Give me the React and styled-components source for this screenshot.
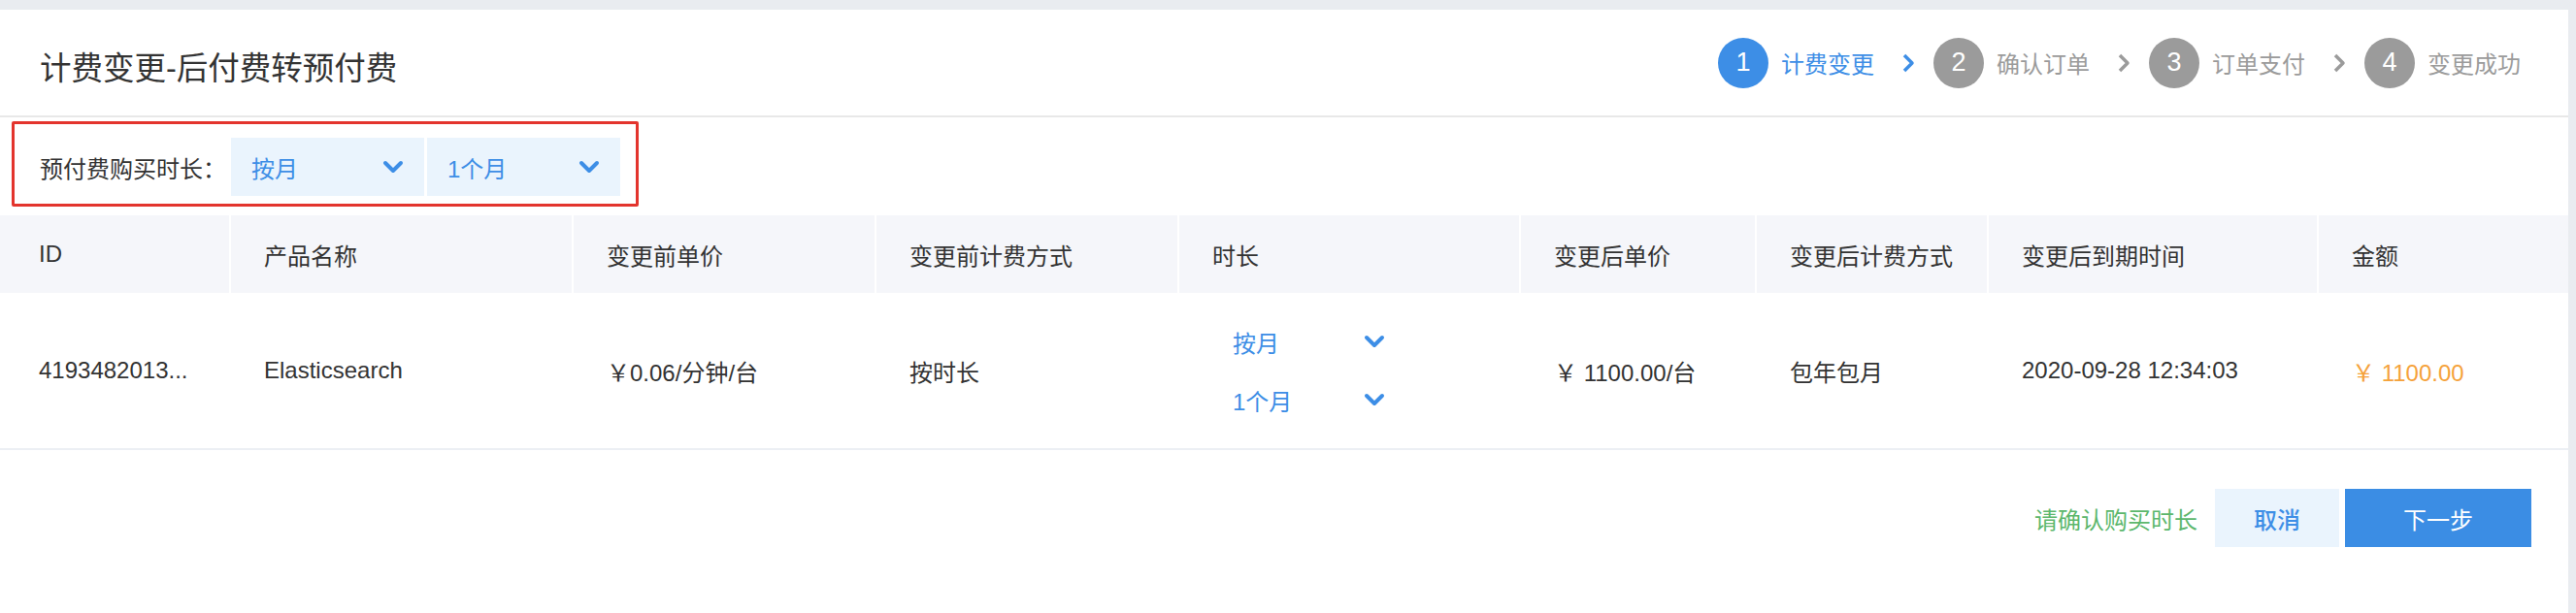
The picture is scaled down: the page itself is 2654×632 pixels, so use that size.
import React from 'react'
import styled, { createGlobalStyle } from 'styled-components'

const BLUE = '#3d8ee6'
const GRAY = '#9b9b9b'

const GlobalStyle = createGlobalStyle`
  html, body {
    margin: 0;
    padding: 0;
    background: #e9ecf0;
  }
  body {
    font-family: "Liberation Sans", "Noto Sans CJK SC", sans-serif;
    color: #333;
  }
`

const Page = styled.div`
  box-sizing: border-box;
  min-height: 632px;
  padding: 10px 8px 0 0;
  display: flex;
  flex-direction: column;
`

const Card = styled.div`
  flex: 1;
  background: #fff;
  display: flex;
  flex-direction: column;
`

const Header = styled.div`
  height: 109px;
  border-bottom: 2px solid #e8e8e8;
  display: flex;
  align-items: center;
  justify-content: space-between;
  padding: 0 49px 0 41px;
`

const Title = styled.div`
  font-size: 32.5px;
  color: #333;
  padding-top: 5px;
`

const Steps = styled.div`
  display: flex;
  align-items: center;
`

const Step = styled.div`
  display: flex;
  align-items: center;
  gap: 13px;
  color: ${props => props.$active ? BLUE : GRAY};
  font-size: 24px;
`

const Circle = styled.div`
  width: 52px;
  height: 52px;
  border-radius: 50%;
  background: ${props => props.$active ? BLUE : GRAY};
  color: #fff;
  font-size: 27px;
  display: flex;
  align-items: center;
  justify-content: center;
`

const StepArrow = styled.svg`
  margin: 0 18px 0 28px;
  color: ${props => props.$active ? BLUE : GRAY};
`

const FilterSection = styled.div`
  padding: 4px 0 9px 12px;
`

const FilterBox = styled.div`
  box-sizing: border-box;
  width: 646px;
  height: 88px;
  border: 3px solid #e3342d;
  border-radius: 2px;
  padding: 11px 0 5px 26px;
  display: flex;
  align-items: center;
`

const Label = styled.span`
  font-size: 24px;
  color: #333;
  margin-right: 5px;
`

const SelectGroup = styled.div`
  display: flex;
  gap: 3px;
`

const SelectBox = styled.div`
  box-sizing: border-box;
  width: 199px;
  height: 60px;
  padding: 0 21px;
  background: ${props => props.$filled ? '#eaf4fd' : 'transparent'};
  color: ${BLUE};
  font-size: 24px;
  display: flex;
  align-items: center;
  justify-content: space-between;
`

const Table = styled.div`
  display: flex;
  flex-direction: column;
`

const Row = styled.div`
  display: grid;
  grid-template-columns: 236px 351px 310px 310px 350px 241px 237px 338px 1fr;
  column-gap: 2px;
  height: ${props => props.$head ? '80px' : '160px'};
  border-bottom: ${props => props.$head ? 'none' : '2px solid #eceff4'};
`

const Cell = styled.div`
  display: flex;
  flex-direction: column;
  justify-content: center;
  padding-left: 34px;
  font-size: 24px;
  background: ${props => props.$head ? '#f5f6fa' : '#fff'};
  color: ${props => props.$color || '#333'};
  white-space: nowrap;
  &:first-child {
    padding-left: 40px;
  }
`

const Footer = styled.div`
  display: flex;
  justify-content: flex-end;
  align-items: center;
  padding: 40px 38px 0 0;
`

const Hint = styled.span`
  color: #5cb76c;
  font-size: 24px;
  margin-right: 18px;
`

const Button = styled.button`
  height: 60px;
  width: ${props => props.$primary ? '192px' : '128px'};
  margin-left: ${props => props.$primary ? '6px' : '0'};
  border: none;
  border-radius: 0;
  background: ${props => props.$primary ? '#3b8de4' : '#eaf4fd'};
  color: ${props => props.$primary ? '#fff' : BLUE};
  font-family: inherit;
  font-size: 24px;
  font-weight: ${props => props.$primary ? 400 : 500};
  cursor: pointer;
`

const ChevronDown = () => (
  <svg width="22" height="14" viewBox="0 0 22 14">
    <polyline points="3,3 11,11 19,3" fill="none" stroke="currentColor" strokeWidth="4" strokeLinecap="round" strokeLinejoin="round" />
  </svg>
)

const Select = ({ value, filled }) => (
  <SelectBox $filled={filled}>
    <span>{value}</span>
    <ChevronDown />
  </SelectBox>
)

const steps = [
  { n: 1, label: '计费变更' },
  { n: 2, label: '确认订单' },
  { n: 3, label: '订单支付' },
  { n: 4, label: '变更成功' },
]

const columns = ['ID', '产品名称', '变更前单价', '变更前计费方式', '时长', '变更后单价', '变更后计费方式', '变更后到期时间', '金额']

export default function App() {
  const current = 1
  return (
    <Page>
      <GlobalStyle />
      <Card>
        <Header>
          <Title>计费变更-后付费转预付费</Title>
          <Steps>
            {steps.map((s, i) => (
              <React.Fragment key={s.n}>
                <Step $active={s.n === current}>
                  <Circle $active={s.n === current}>{s.n}</Circle>
                  {s.label}
                </Step>
                {i < steps.length - 1 && (
                  <StepArrow $active={s.n === current} width="15" height="22" viewBox="0 0 15 22">
                    <polyline points="3,3 11,11 3,19" fill="none" stroke="currentColor" strokeWidth="3.5" strokeLinejoin="round" />
                  </StepArrow>
                )}
              </React.Fragment>
            ))}
          </Steps>
        </Header>

        <FilterSection>
          <FilterBox>
            <Label>预付费购买时长：</Label>
            <SelectGroup>
              <Select value="按月" filled />
              <Select value="1个月" filled />
            </SelectGroup>
          </FilterBox>
        </FilterSection>

        <Table>
          <Row $head>
            {columns.map(c => <Cell key={c} $head>{c}</Cell>)}
          </Row>
          <Row>
            <Cell>4193482013...</Cell>
            <Cell>Elasticsearch</Cell>
            <Cell>￥0.06/分钟/台</Cell>
            <Cell>按时长</Cell>
            <Cell>
              <Select value="按月" />
              <Select value="1个月" />
            </Cell>
            <Cell>￥ 1100.00/台</Cell>
            <Cell>包年包月</Cell>
            <Cell>2020-09-28 12:34:03</Cell>
            <Cell $color="#f5a23b">￥ 1100.00</Cell>
          </Row>
        </Table>

        <Footer>
          <Hint>请确认购买时长</Hint>
          <Button>取消</Button>
          <Button $primary>下一步</Button>
        </Footer>
      </Card>
    </Page>
  )
}
